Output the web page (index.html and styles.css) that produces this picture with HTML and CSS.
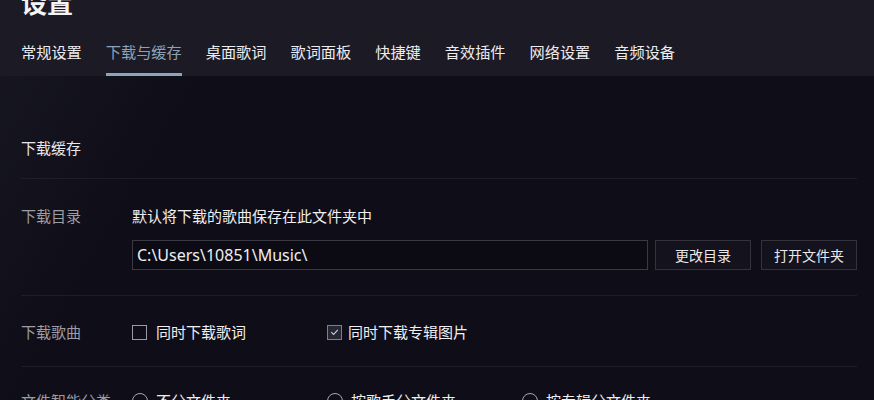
FILE: index.html
```html
<!DOCTYPE html>
<html lang="zh-CN">
<head>
<meta charset="utf-8">
<title>设置</title>
<link rel="stylesheet" href="styles.css">
</head>
<body>
<div class="page">
  <header class="header">
    <h1 class="title">设置</h1>
    <nav class="tabs">
      <span class="tab">常规设置</span>
      <span class="tab active">下载与缓存</span>
      <span class="tab">桌面歌词</span>
      <span class="tab">歌词面板</span>
      <span class="tab">快捷键</span>
      <span class="tab">音效插件</span>
      <span class="tab">网络设置</span>
      <span class="tab">音频设备</span>
    </nav>
  </header>
  <main class="content">
    <div class="section-title">下载缓存</div>
    <div class="row row-dir">
      <div class="label">下载目录</div>
      <div class="controls">
        <div class="desc">默认将下载的歌曲保存在此文件夹中</div>
        <div class="path-line">
          <div class="path-input">C:\Users\10851\Music\</div>
          <button class="btn">更改目录</button>
          <button class="btn btn-last">打开文件夹</button>
        </div>
      </div>
    </div>
    <div class="row row-song">
      <div class="label">下载歌曲</div>
      <div class="options">
        <label class="opt"><span class="box"></span><span class="opt-text">同时下载歌词</span></label>
        <label class="opt opt-checked"><span class="box checked"><svg viewBox="0 0 14 14" width="14" height="14"><path d="M3.5 7.2 L6 9.6 L10.6 4.6" fill="none" stroke="#c9ccd4" stroke-width="1.2"/></svg></span><span class="opt-text">同时下载专辑图片</span></label>
      </div>
    </div>
    <div class="row row-class">
      <div class="label">文件智能分类</div>
      <div class="options">
        <label class="opt"><span class="radio"></span><span class="opt-text">不分文件夹</span></label>
        <label class="opt"><span class="radio"></span><span class="opt-text">按歌手分文件夹</span></label>
        <label class="opt"><span class="radio"></span><span class="opt-text">按专辑分文件夹</span></label>
      </div>
    </div>
  </main>
</div>
</body>
</html>
```
FILE: styles.css
```css
* { box-sizing: border-box; }
html, body {
  margin: 0;
  padding: 0;
  height: 100%;
  overflow: hidden;
}
body {
  background: #0f0e18;
  font-family: "Noto Sans CJK SC", "Noto Sans", sans-serif;
  color: #e6e6ea;
}
.page {
  width: 874px;
  height: 400px;
  overflow: hidden;
  background:
    linear-gradient(120deg, rgba(60,62,80,0.18) 0%, rgba(15,14,24,0) 22%),
    #0f0e18;
}
.header {
  display: flow-root;
  background: #1c1b25;
  padding: 0 0 0 21px;
  height: 76px;
  overflow: hidden;
}
.title {
  margin: -11px 0 0 0;
  font-size: 26px;
  line-height: 26px;
  font-weight: 700;
  color: #f4f4f6;
}
.tabs {
  display: flex;
  gap: 24px;
  margin-top: 26px;
}
.tab {
  font-size: 15.2px;
  line-height: 20px;
  padding-bottom: 12px;
  border-bottom: 3px solid transparent;
  color: #ececf0;
  white-space: nowrap;
}
.tab.active {
  color: #8ea2b6;
  border-bottom-color: #8ea4bb;
}
.content {
  padding: 62px 17px 0 21px;
}
.section-title {
  font-size: 15px;
  line-height: 20px;
  color: #e8e8ec;
  padding-bottom: 20px;
  border-bottom: 1px solid #1e1d29;
}
.row {
  display: flex;
  border-bottom: 1px solid #1e1d29;
}
.label {
  width: 111px;
  flex: none;
  font-size: 15px;
  line-height: 20px;
  color: #9d9da4;
  white-space: nowrap;
}
.row-dir {
  padding: 27px 0 25px;
}
.controls {
  flex: 1;
  display: flex;
  flex-direction: column;
  gap: 14px;
}
.desc {
  font-size: 15px;
  line-height: 20px;
  color: #efeff2;
}
.path-line {
  display: flex;
  height: 30px;
}
.path-input {
  width: 516px;
  border: 1px solid #3a3944;
  background: #0c0b14;
  font-family: "Noto Sans", "Noto Sans CJK SC", sans-serif;
  font-size: 16px;
  line-height: 28px;
  padding-left: 4px;
  color: #efeff2;
}
.btn {
  width: 96px;
  margin-left: 7px;
  border: 1px solid #33323d;
  background: #14131d;
  color: #e8e8ec;
  font-family: inherit;
  font-size: 14px;
  line-height: 20px;
  padding: 0;
}
.btn-last {
  margin-left: 10px;
}
.row-song {
  padding: 26px 0 24px;
}
.row-class {
  padding: 24px 0 24px;
  border-bottom: none;
}
.options {
  display: flex;
}
.opt {
  width: 195px;
  display: flex;
  align-items: center;
  font-size: 15px;
  line-height: 20px;
  color: #efeff2;
  white-space: nowrap;
}
.box {
  width: 15px;
  height: 15px;
  border: 1px solid #9a9aa2;
  margin-right: 9px;
  flex: none;
}
.box.checked {
  border-color: #7c7f8c;
  background: #262734;
  display: flex;
  align-items: center;
  justify-content: center;
  margin-right: 6px;
}
.box.checked svg { display: block; }
.radio {
  width: 16px;
  height: 16px;
  border: 1px solid #a8a8b0;
  border-radius: 50%;
  margin-right: 8px;
  flex: none;
}
```
